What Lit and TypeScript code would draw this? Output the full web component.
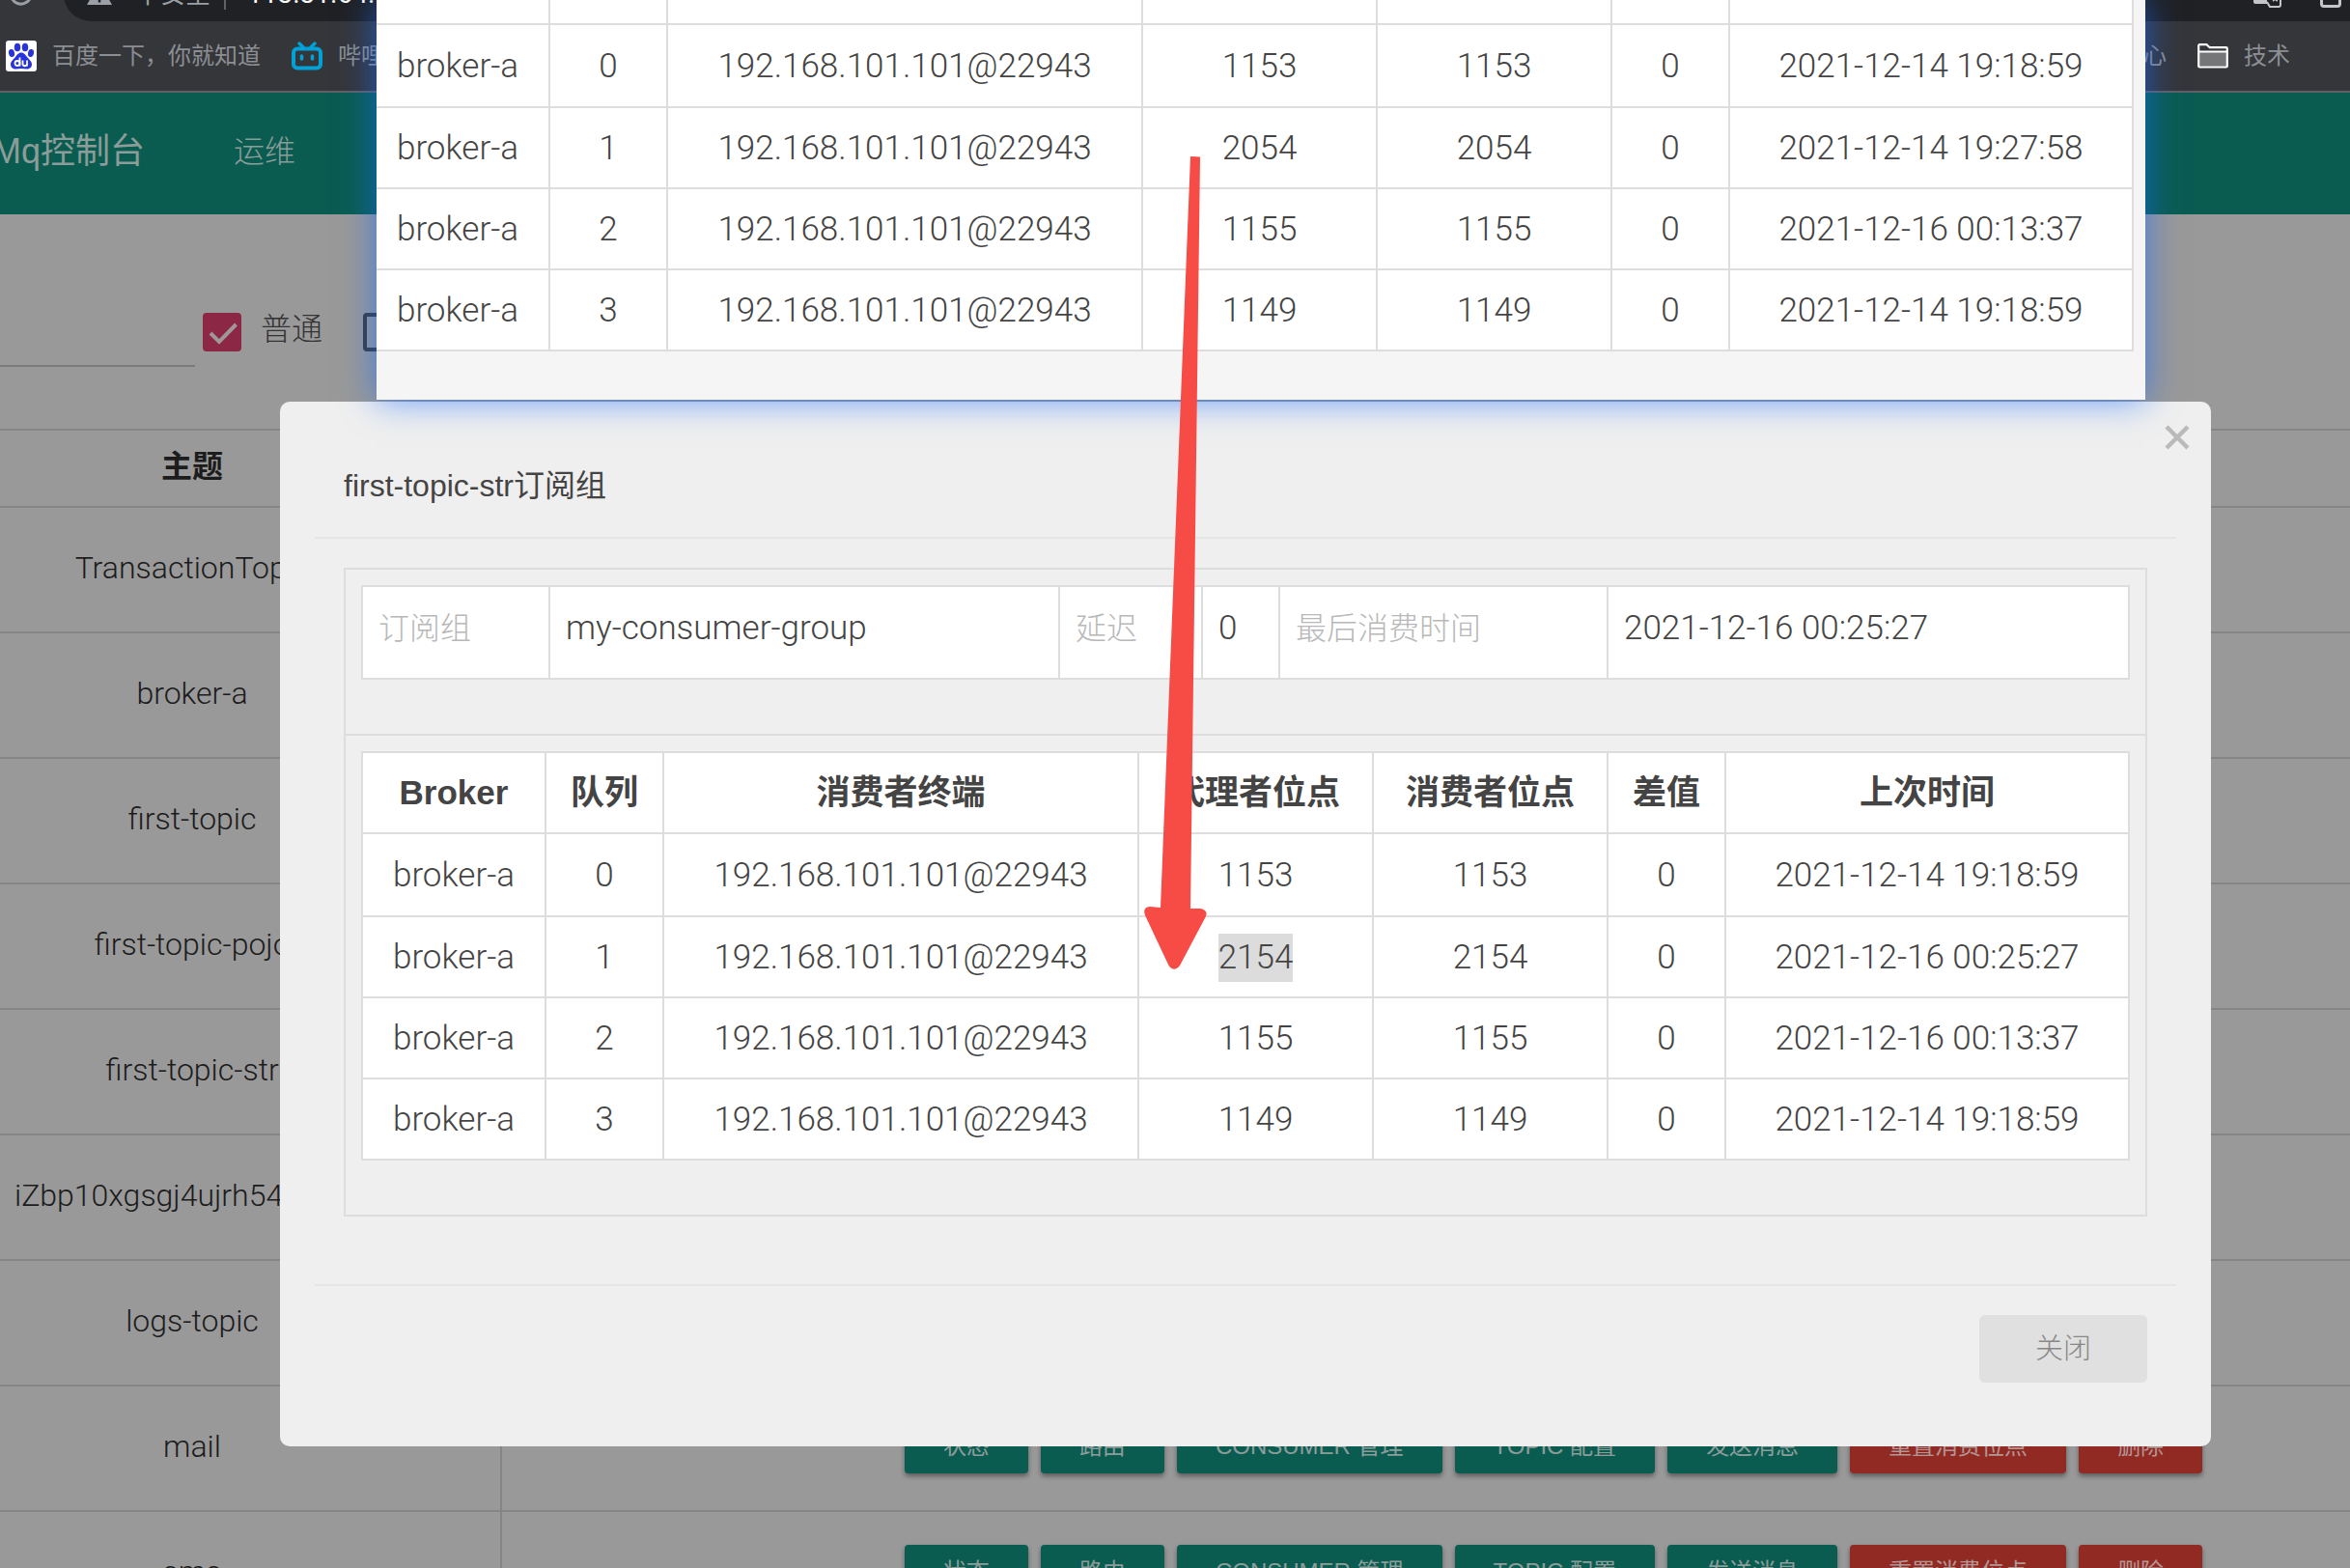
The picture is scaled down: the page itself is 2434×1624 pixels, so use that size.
import { LitElement, html, css, svg, nothing } from "lit";
import { customElement, property } from "lit/decorators.js";
import { classMap } from "lit/directives/class-map.js";

interface QueueRow {
  queue: number;
  brokerOffset: number;
  consumerOffset: number;
  lastTime: string;
  selected?: boolean;
}

const BEFORE: QueueRow[] = [
  { queue: 0, brokerOffset: 1153, consumerOffset: 1153, lastTime: "2021-12-14 19:18:59" },
  { queue: 1, brokerOffset: 2054, consumerOffset: 2054, lastTime: "2021-12-14 19:27:58" },
  { queue: 2, brokerOffset: 1155, consumerOffset: 1155, lastTime: "2021-12-16 00:13:37" },
  { queue: 3, brokerOffset: 1149, consumerOffset: 1149, lastTime: "2021-12-14 19:18:59" },
];

const AFTER: QueueRow[] = [
  { queue: 0, brokerOffset: 1153, consumerOffset: 1153, lastTime: "2021-12-14 19:18:59" },
  { queue: 1, brokerOffset: 2154, consumerOffset: 2154, lastTime: "2021-12-16 00:25:27", selected: true },
  { queue: 2, brokerOffset: 1155, consumerOffset: 1155, lastTime: "2021-12-16 00:13:37" },
  { queue: 3, brokerOffset: 1149, consumerOffset: 1149, lastTime: "2021-12-14 19:18:59" },
];

const TOPICS = [
  "TransactionTopic",
  "broker-a",
  "first-topic",
  "first-topic-pojo",
  "first-topic-str",
  "iZbp10xgsgj4ujrh54",
  "logs-topic",
  "mail",
  "sms",
];

const ACTIONS = [
  { label: "状态" },
  { label: "路由" },
  { label: "CONSUMER 管理" },
  { label: "TOPIC 配置" },
  { label: "发送消息" },
  { label: "重置消费位点", danger: true },
  { label: "删除", danger: true },
];

@customElement("queue-table")
class QueueTable extends LitElement {
  @property({ attribute: false }) rows: QueueRow[] = [];
  @property({ type: Boolean }) headless = false;

  static styles = css`
    :host {
      display: block;
    }
    table {
      width: 100%;
      table-layout: fixed;
      border-collapse: separate;
      border-spacing: 0;
      border: 0 solid #ddd;
      border-left-width: 2px;
      background: #fff;
      color: #444;
      font: 300 35px/42px Roboto, "Noto Sans CJK SC", sans-serif;
    }
    table.full {
      border-top-width: 2px;
    }
    th,
    td {
      box-sizing: border-box;
      height: 84px;
      padding: 0;
      border: 0 solid #ddd;
      border-width: 0 2px 2px 0;
      text-align: center;
      white-space: nowrap;
    }
    td {
      padding-top: 2px;
    }
    th {
      font: 700 35px/42px "Liberation Sans", "Noto Sans CJK SC", sans-serif;
    }
    .first td {
      height: 86px;
    }
    .stub td {
      height: 26px;
    }
    .broker {
      width: 190px;
    }
    .narrow {
      width: 122px;
    }
    .offset {
      width: 243px;
    }
    .time {
      width: 418px;
    }
    mark {
      display: inline-block;
      height: 50px;
      line-height: 50px;
      background: #dcdcdc;
      color: inherit;
    }
  `;

  render() {
    return html`
      <table class=${classMap({ full: !this.headless })}>
        <colgroup>
          <col class="broker" />
          <col class="narrow" />
          <col />
          <col class="offset" />
          <col class="offset" />
          <col class="narrow" />
          <col class="time" />
        </colgroup>
        ${this.headless
          ? nothing
          : html`<thead>
              <tr>
                <th scope="col">Broker</th>
                <th scope="col">队列</th>
                <th scope="col">消费者终端</th>
                <th scope="col">代理者位点</th>
                <th scope="col">消费者位点</th>
                <th scope="col">差值</th>
                <th scope="col">上次时间</th>
              </tr>
            </thead>`}
        <tbody>
          ${this.headless
            ? html`<tr class="stub" aria-hidden="true">
                <td></td><td></td><td></td><td></td><td></td><td></td><td></td>
              </tr>`
            : nothing}
          ${this.rows.map(
            (r, i) => html`<tr class=${classMap({ first: i === 0 })}>
              <td>broker-a</td>
              <td>${r.queue}</td>
              <td>192.168.101.101@22943</td>
              <td>${r.selected ? html`<mark>${r.brokerOffset}</mark>` : r.brokerOffset}</td>
              <td>${r.consumerOffset}</td>
              <td>${r.brokerOffset - r.consumerOffset}</td>
              <td>${r.lastTime}</td>
            </tr>`
          )}
        </tbody>
      </table>
    `;
  }
}

@customElement("browser-chrome")
class BrowserChrome extends LitElement {
  static styles = css`
    :host {
      display: block;
      overflow: hidden;
      background: #35363a;
      border-bottom: 2px solid #606166;
      color: #9aa0a6;
      font: 400 24px/32px Roboto, "Noto Sans CJK SC", sans-serif;
    }
    .toolbar {
      display: flex;
      align-items: center;
      height: 56px;
      margin-top: -34px;
      padding-left: 8px;
      gap: 30px;
    }
    .omnibox {
      flex: 1;
      display: flex;
      align-items: center;
      height: 56px;
      padding: 0 8px 0 24px;
      border-radius: 28px 0 0 28px;
      background: #202124;
      font-size: 26px;
    }
    .warn {
      margin-right: 24px;
    }
    .divider {
      width: 2px;
      height: 32px;
      margin: 0 22px 0 14px;
      background: #5f6368;
    }
    .host {
      flex: 1;
      color: #fff;
      font-size: 28px;
    }
    .share {
      margin-left: 38px;
    }
    .bookmarks {
      display: flex;
      align-items: center;
      height: 72px;
      padding: 0 62px 0 6px;
      color: #8b8f93;
    }
    .bookmarks a {
      display: flex;
      align-items: center;
      gap: 16px;
      color: inherit;
      text-decoration: none;
      white-space: nowrap;
    }
    .bookmarks a + a {
      margin-left: 32px;
    }
    .bookmarks a.end {
      margin-left: auto;
    }
    svg {
      display: block;
      flex: none;
    }
  `;

  render() {
    return html`
      <div class="toolbar">
        <svg width="28" height="28" viewBox="0 0 28 28" aria-hidden="true">
          <path d="M22.500 8.500A10.300 10.300 0 1 0 24 14" fill="none" stroke="#9aa0a6" stroke-width="3" />
          <path d="M24 2v9h-9z" fill="#9aa0a6" />
        </svg>
        <div class="omnibox">
          <svg class="warn" width="26" height="24" viewBox="0 0 26 24" aria-hidden="true">
            <path d="M13 0 26 23H0z" fill="#9aa0a6" />
            <path d="M13 8v7M13 17.500v3" stroke="#202124" stroke-width="2.600" />
          </svg>
          <span>不安全</span>
          <span class="divider"></span>
          <span class="host">113.31.64.</span>
          <svg width="30" height="28" viewBox="0 0 30 28" aria-hidden="true">
            <rect x="0" y="0" width="18" height="24" rx="2" fill="#c4c5c7" />
            <path d="M14 8h12a2 2 0 0 1 2 2v15a2 2 0 0 1-2 2H17l-3-5" fill="#202124" stroke="#c4c5c7" stroke-width="2" />
            <path d="M19 13h7M22.500 11v2M25 14c-1 3-3 6-5 7M20 16c1 2 3 4 5 5" fill="none" stroke="#c4c5c7" stroke-width="1.500" />
          </svg>
          <svg class="share" width="24" height="28" viewBox="0 0 24 28" aria-hidden="true">
            <path d="M8 9H5a2.500 2.500 0 0 0-2.500 2.500V24A2.500 2.500 0 0 0 5 26.500h14A2.500 2.500 0 0 0 21.500 24V11.500A2.500 2.500 0 0 0 19 9h-3M12 18V2M7 7l5-5 5 5" fill="none" stroke="#c4c5c7" stroke-width="3" />
          </svg>
        </div>
      </div>
      <nav class="bookmarks">
        <a href="#baidu">
          <svg width="32" height="32" viewBox="0 0 32 32" aria-hidden="true">
            <rect width="32" height="32" rx="3" fill="#fff" />
            <g fill="#2932e1">
              <ellipse cx="12" cy="7" rx="3.200" ry="4.300" />
              <ellipse cx="20" cy="7" rx="3.200" ry="4.300" />
              <ellipse cx="6" cy="13" rx="3" ry="4" transform="rotate(-12 6 13)" />
              <ellipse cx="26" cy="13" rx="3" ry="4" transform="rotate(12 26 13)" />
              <path d="M16 12.500c3 0 4.500 2.500 6 4.500 2 2.600 5 4.500 5 7.800 0 3.200-2.600 4.700-5.200 4.700-2 0-3.800-.5-5.800-.5s-3.800.5-5.800.5C7.600 29.500 5 28 5 24.800c0-3.300 3-5.200 5-7.800 1.500-2 3-4.500 6-4.500z" />
            </g>
            <g fill="none" stroke="#fff" stroke-width="1.800">
              <circle cx="12" cy="23.500" r="2.500" />
              <path d="M14.500 17.500v9M17.500 20.500v3.500a2 2 0 0 0 4.500 0v-3.500 6" />
            </g>
          </svg>
          <span>百度一下，你就知道</span>
        </a>
        <a href="#bilibili">
          <svg width="32" height="32" viewBox="0 0 32 32" aria-hidden="true">
            <g fill="none" stroke="#00a1d6" stroke-width="4" stroke-linecap="round">
              <rect x="2" y="8.500" width="28" height="20" rx="4" />
              <path d="M8 3l4 4M24 3l-4 4" stroke-width="3.500" />
              <path d="M10.500 16v3M21.500 16v3" stroke-width="3.500" />
            </g>
          </svg>
          <span>哔哩哔哩</span>
        </a>
        <a class="end" href="#center"><span>中心</span></a>
        <a href="#tech">
          <svg width="32" height="26" viewBox="0 0 32 26" aria-hidden="true">
            <path d="M1.500 8.500h29v15h-29z" fill="#757678" />
            <path d="M1.200 23V2.200a1 1 0 0 1 1-1h7.300l3.300 3h17a1 1 0 0 1 1 1V23.500a1 1 0 0 1-1 1H2.200a1 1 0 0 1-1-1zM1.200 8.500h29.500" fill="none" stroke="#fff" stroke-width="2.200" />
          </svg>
          <span>技术</span>
        </a>
      </nav>
    `;
  }
}

@customElement("app-root")
class AppRoot extends LitElement {
  static styles = css`
    :host {
      display: block;
      position: relative;
      height: 100vh;
      overflow: hidden;
      background: #999;
      font: 300 32px/42px Roboto, "Noto Sans CJK SC", sans-serif;
    }
    button,
    input {
      font: inherit;
      margin: 0;
      border: 0;
    }

    .topbar {
      box-sizing: border-box;
      display: flex;
      align-items: center;
      height: 126px;
      margin-left: -120px;
      padding-bottom: 4px;
      gap: 92px;
      background: #0a5c51;
      color: #8c9c99;
    }
    .topbar a {
      color: inherit;
      text-decoration: none;
      white-space: nowrap;
    }
    .brand {
      font: 400 36px/42px "Liberation Sans", "Noto Sans CJK SC", sans-serif;
    }

    .filters {
      box-sizing: border-box;
      display: flex;
      align-items: flex-end;
      height: 222px;
      padding-bottom: 64px;
      color: #333;
    }
    .search {
      box-sizing: border-box;
      width: 202px;
      height: 56px;
      margin-right: 8px;
      border-bottom: 2px solid #7b7b7b;
      border-radius: 0;
      background: none;
      outline: none;
    }
    .option {
      display: flex;
      gap: 20px;
      margin: 0 42px 16px 0;
    }
    .box {
      display: grid;
      width: 40px;
      height: 40px;
    }
    .box > * {
      grid-area: 1 / 1;
    }
    .box input {
      appearance: none;
      box-sizing: border-box;
      width: 40px;
      height: 40px;
      border: 4px solid #3a3a3a;
      border-radius: 4px;
    }
    .box input:checked {
      border-color: #8c2846;
      background: #8c2846;
    }
    .box svg {
      pointer-events: none;
    }
    .option span {
      line-height: 34px;
    }

    .topics {
      width: calc(100% + 384px);
      margin-left: -120px;
      table-layout: fixed;
      border-collapse: separate;
      border-spacing: 0;
      color: #1c1c1c;
    }
    .topics th,
    .topics td {
      box-sizing: border-box;
      height: 130px;
      padding: 0 0 4px;
      border-top: 2px solid #858585;
      text-align: center;
      white-space: nowrap;
    }
    .topics th {
      height: 80px;
      font-weight: 700;
    }
    .topics th:first-child,
    .topics td:first-child {
      border-right: 2px solid #858585;
    }
    .topics .name {
      width: 640px;
    }
    .topics td.clipped {
      padding-left: 135px;
      text-align: left;
    }
    .actions {
      display: flex;
      justify-content: center;
      gap: 13px;
    }
    .actions button {
      height: 56px;
      padding: 0 40px;
      border-radius: 4px;
      background: #0a5c51;
      color: #8c9c99;
      font: 400 24px/56px "Liberation Sans", "Noto Sans CJK SC", sans-serif;
      box-shadow: 0 3px 5px rgba(0, 0, 0, 0.4);
    }
    .actions button.danger {
      background: #922a24;
      color: #b29694;
    }

    .modal {
      position: absolute;
      top: 416px;
      left: 290px;
      right: 144px;
      padding: 0 36px;
      border-radius: 10px;
      background: #efefef;
      color: #444;
    }
    .modal header {
      padding: 66px 30px 32px;
      border-bottom: 2px solid #e5e5e5;
    }
    .modal h2 {
      margin: 0;
      font: 400 32px/42px "Liberation Sans", "Noto Sans CJK SC", sans-serif;
    }
    .dismiss {
      position: absolute;
      top: 16px;
      right: 14px;
      padding: 8px;
      background: none;
    }
    .dismiss svg {
      display: block;
    }
    .content {
      padding: 30px 30px 70px;
    }
    .panel {
      padding: 16px 16px 56px;
      border: 2px solid #ddd;
    }
    .panel + .panel {
      border-top: 0;
    }
    .summary {
      width: 100%;
      table-layout: fixed;
      border-collapse: separate;
      border-spacing: 0;
      border: 0 solid #ddd;
      border-width: 2px 0 0 2px;
      background: #fff;
      font-size: 35px;
    }
    .summary th,
    .summary td {
      box-sizing: border-box;
      height: 96px;
      padding: 0 16px 8px;
      border: 0 solid #ddd;
      border-width: 0 2px 2px 0;
      text-align: left;
      white-space: nowrap;
    }
    .summary th {
      color: #b8b8b8;
      font-size: 32px;
      font-weight: 300;
    }
    .w-label {
      width: 194px;
    }
    .w-group {
      width: 528px;
    }
    .w-delay {
      width: 148px;
    }
    .w-count {
      width: 80px;
    }
    .w-time {
      width: 340px;
    }
    .modal footer {
      display: flex;
      justify-content: flex-end;
      padding: 30px 30px 66px;
      border-top: 2px solid #e5e5e5;
    }
    .close {
      height: 70px;
      padding: 0 58px;
      border-radius: 6px;
      background: #e0e0e0;
      color: #888;
      font-size: 29px;
    }

    .overlay-window {
      position: absolute;
      top: 0;
      left: 390px;
      right: 212px;
      background: #f5f5f5;
      box-shadow: 0 0 34px rgba(24, 110, 255, 0.66);
    }
    .clip {
      overflow: hidden;
      padding: 0 12px 50px 0;
    }
    .clip queue-table {
      margin-left: -12px;
    }
    .arrow {
      position: absolute;
      top: 156px;
      left: 1180px;
    }
  `;

  private checkbox(label: string, checked: boolean) {
    return html`<label class="option">
      <span class="box">
        <input type="checkbox" .checked=${checked} aria-label=${label || "filter"} />
        ${checked
          ? html`<svg viewBox="0 0 40 40" aria-hidden="true">
              ${svg`<path d="M8 21l9 9L34.500 12" fill="none" stroke="#9f9799" stroke-width="4" />`}
            </svg>`
          : nothing}
      </span>
      ${label ? html`<span>${label}</span>` : nothing}
    </label>`;
  }

  render() {
    return html`
      <browser-chrome></browser-chrome>
      <nav class="topbar">
        <a class="brand" href="#home">RocketMq控制台</a>
        <a href="#ops">运维</a>
      </nav>
      <div class="filters">
        <input class="search" type="text" aria-label="主题" />
        ${this.checkbox("普通", true)} ${this.checkbox("", false)}
      </div>
      <table class="topics">
        <colgroup>
          <col class="name" />
          <col />
        </colgroup>
        <thead>
          <tr>
            <th scope="col">主题</th>
            <th></th>
          </tr>
        </thead>
        <tbody>
          ${TOPICS.map(
            (t) => html`<tr>
              <td class=${classMap({ clipped: t.startsWith("iZ") })}>${t}</td>
              <td>
                <div class="actions">
                  ${ACTIONS.map(
                    (a) => html`<button type="button" class=${classMap({ danger: !!a.danger })}>${a.label}</button>`
                  )}
                </div>
              </td>
            </tr>`
          )}
        </tbody>
      </table>

      <section class="modal" role="dialog" aria-labelledby="title">
        <header><h2 id="title">first-topic-str订阅组</h2></header>
        <button class="dismiss" type="button" aria-label="关闭">
          <svg width="26" height="26" viewBox="0 0 26 26" aria-hidden="true">
            <path d="M2 2l22 22M24 2L2 24" stroke="#bababa" stroke-width="4.500" />
          </svg>
        </button>
        <div class="content">
          <div class="panel">
            <table class="summary">
              <colgroup>
                <col class="w-label" />
                <col class="w-group" />
                <col class="w-delay" />
                <col class="w-count" />
                <col class="w-time" />
                <col />
              </colgroup>
              <tbody>
                <tr>
                  <th scope="row">订阅组</th>
                  <td>my-consumer-group</td>
                  <th scope="row">延迟</th>
                  <td>0</td>
                  <th scope="row">最后消费时间</th>
                  <td>2021-12-16 00:25:27</td>
                </tr>
              </tbody>
            </table>
          </div>
          <div class="panel"><queue-table .rows=${AFTER}></queue-table></div>
        </div>
        <footer><button class="close" type="button">关闭</button></footer>
      </section>

      <section class="overlay-window">
        <div class="clip"><queue-table headless .rows=${BEFORE}></queue-table></div>
      </section>

      <svg class="arrow" width="80" height="860" viewBox="1180 156 80 860" aria-hidden="true">
        <path
          d="M1233 162L1243 162.500L1233 941L1243.500 941Q1252 943 1248.500 950L1222 1000Q1216 1007.500 1210.500 1000L1186 948Q1183 939.500 1191 939L1202 940Z"
          fill="#f74b46"
        />
      </svg>
    `;
  }
}
